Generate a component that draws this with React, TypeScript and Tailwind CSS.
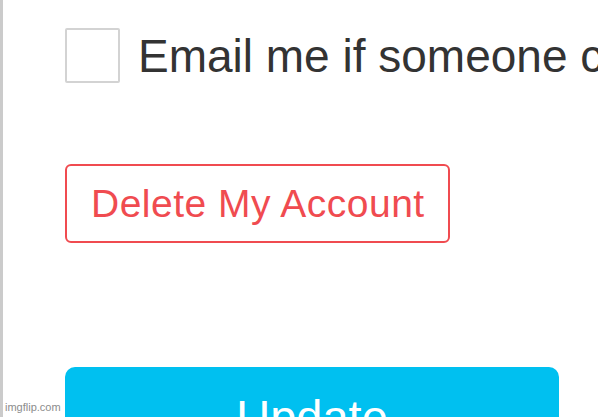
export default function App() {
  return (
    <div className="relative h-[417px] w-[598px] overflow-hidden bg-white border-l-[3px] border-[#cbcbcb] font-['Liberation_Sans',Arial,sans-serif]">
      <div className="pl-[62px] pt-[28px] flex flex-col items-start">
        <label className="flex items-center gap-[18px] whitespace-nowrap">
          <span className="block w-[55px] h-[55px] shrink-0 border-2 border-[#d3d3d3] rounded-[2px] bg-white" />
          <span className="text-[46px] leading-none text-[#333333]">Email me if someone comments on my posts</span>
        </label>

        <button className="mt-[81px] w-[385px] h-[79px] border-2 border-[#f04b50] rounded-[6px] flex items-center pl-[24px] text-[39px] tracking-[0.5px] leading-none text-[#f04b50] whitespace-nowrap">
          Delete My Account
        </button>

        <button className="mt-[124px] w-[494px] h-[120px] bg-[#00c0f0] rounded-[10px] pt-[26px] text-[47px] leading-none text-white flex justify-center items-start">
          Update
        </button>
      </div>

      <div className="absolute left-0 bottom-[4px] pl-[2px] pr-[3px] text-[11px] leading-none text-[#8c8c8c] bg-white">
        imgflip.com
      </div>
    </div>
  )
}
